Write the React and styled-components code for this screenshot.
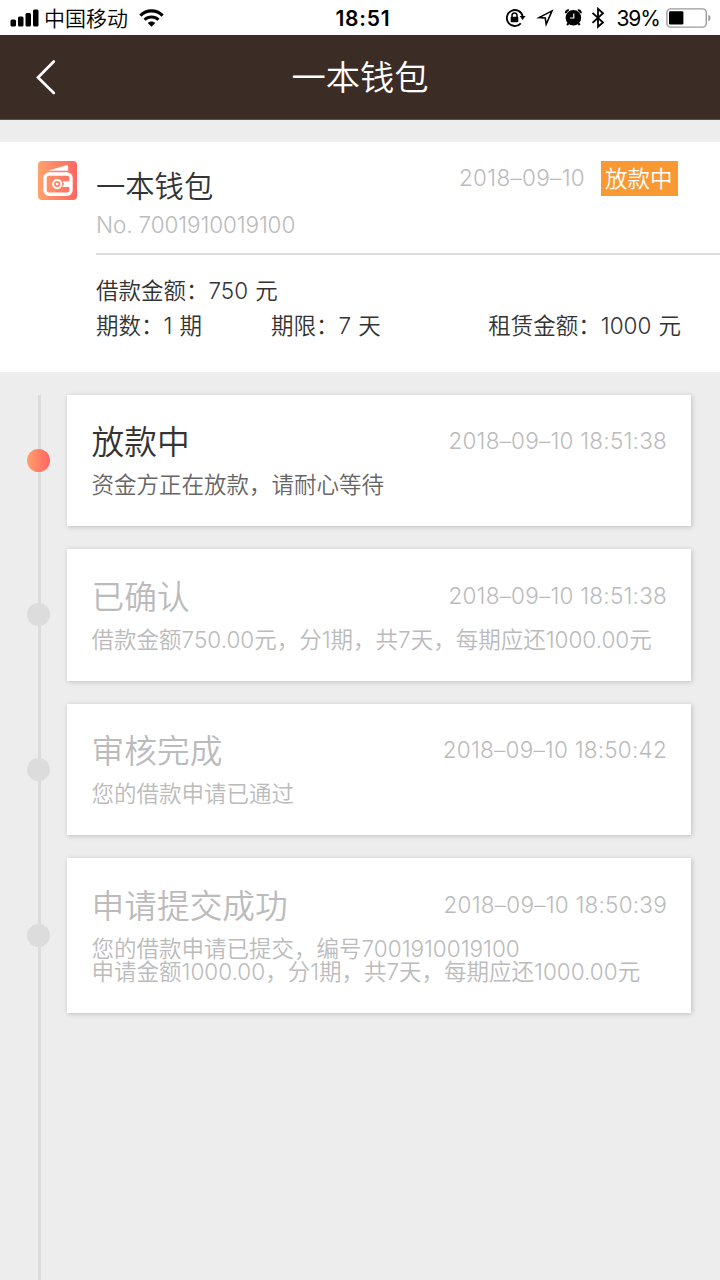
import * as React from "react";
import styled, { createGlobalStyle } from "styled-components";

const GlobalStyle = createGlobalStyle`
  * {
    box-sizing: border-box;
  }
  body {
    margin: 0;
    background-color: #ededed;
    font-family: Inter, "Noto Sans CJK SC", sans-serif;
    font-weight: 350;
    color: #333;
  }
`;

const Page = styled.div`
  display: flex;
  flex-direction: column;
  width: 720px;
  height: 1280px;
  overflow: hidden;
`;

const StatusBar = styled.div`
  display: grid;
  grid-template-columns: 1fr auto 1fr;
  align-items: center;
  height: 35px;
  flex-shrink: 0;
  padding: 0 9px 0 10px;
  background-color: #fff;
  color: #000;
  font-size: 21px;
  font-weight: 400;
  line-height: 35px;
  white-space: nowrap;

  svg {
    display: block;
    flex-shrink: 0;
  }
`;

const StatusLeft = styled.div`
  display: flex;
  align-items: center;

  span {
    margin: 0 11px 0 5px;
    font-weight: 350;
  }
`;

const Clock = styled.div`
  font-size: 21px;
  font-weight: 600;
  letter-spacing: 0.8px;
  padding: 1px 0 0 5px;
`;

const StatusRight = styled.div`
  display: flex;
  align-items: center;
  justify-content: flex-end;

  span {
    margin-right: 6px;
    padding-top: 1px;
    font-size: 21px;
    letter-spacing: -1px;
  }
`;

const NavBar = styled.header`
  display: grid;
  grid-template-columns: 92px 1fr 92px;
  align-items: center;
  height: 85px;
  flex-shrink: 0;
  background-color: #3c2c26;
  border-bottom: 1px solid #5d504b;
  color: #fff;

  svg {
    display: block;
    margin-left: 35px;
  }
  h1 {
    margin: 0;
    padding-top: 2px;
    font-size: 34.3px;
    font-weight: 350;
    line-height: 82px;
    text-align: center;
  }
`;

const Summary = styled.section`
  display: grid;
  grid-template-columns: 58px 1fr;
  height: 230px;
  flex-shrink: 0;
  margin-top: 22px;
  padding: 19px 0 0 38px;
  background-color: #fff;
  white-space: nowrap;

  > svg {
    display: block;
  }
`;

const SummaryHead = styled.div`
  display: flex;
  justify-content: space-between;
  height: 94px;
  padding-right: 42px;
  border-bottom: 2px solid #dcdcdc;
`;

const Name = styled.div`
  font-size: 29.3px;
  line-height: 51px;

  small {
    display: block;
    color: #bbb;
    font-size: 22.5px;
    font-weight: 330;
    line-height: 25px;
    letter-spacing: -0.12px;
  }
`;

const State = styled.div`
  display: flex;
  align-items: flex-start;

  time {
    margin-right: 16px;
    color: #bbb;
    font-size: 22.5px;
    font-weight: 330;
    line-height: 34px;
    letter-spacing: 0.3px;
  }
`;

const Tag = styled.span`
  width: 77px;
  height: 35px;
  background-color: #f89933;
  color: #fff;
  font-size: 22.5px;
  line-height: 35px;
  text-indent: 4px;
`;

const Terms = styled.div`
  padding: 18px 39px 0 0;
  font-size: 22.5px;
  line-height: 35px;
  word-spacing: 0.8px;

  div {
    display: grid;
    grid-template-columns: 175px 1fr auto;
  }
`;

const Timeline = styled.main`
  position: relative;
  flex: 1;
  margin-top: 22.7px;

  &:before {
    background-color: #dcdcdc;
    bottom: 0;
    content: "";
    left: 38px;
    position: absolute;
    top: 0;
    width: 3px;
  }
`;

const Step = styled.div`
  position: relative;
  display: grid;
  grid-template-columns: 67px 624px;
  align-items: center;
  margin-bottom: 23px;
`;

const Dot = styled.i`
  width: 23px;
  height: 23px;
  margin-left: 27px;
  border-radius: 50%;
  background: ${(props) =>
    props.$active ? "linear-gradient(90deg, #ffa06c, #ff6462)" : "#dcdcdc"};
`;

const Card = styled.article`
  padding: 27.5px 24px 30px 24.6px;
  background-color: #fff;
  box-shadow: 1px 1px 5px rgba(0, 0, 0, 0.2);
  color: ${(props) => (props.$active ? "#666" : "#bbb")};
  white-space: nowrap;

  p {
    margin: 11px 0 0;
    font-size: 22.5px;
    line-height: 23px;
    white-space: pre-line;
  }
`;

const CardHead = styled.div`
  display: flex;
  justify-content: space-between;
  line-height: 40px;

  h2 {
    margin: 0;
    color: ${(props) => (props.$active ? "#333" : "#bbb")};
    font-size: 32.7px;
    font-weight: 350;
  }
  time {
    color: #bbb;
    font-size: 22.5px;
    font-weight: 330;
    line-height: 38px;
    letter-spacing: 0.23px;
  }
`;

const steps = [
  {
    title: "放款中",
    time: "2018–09–10 18:51:38",
    text: "资金方正在放款，请耐心等待",
  },
  {
    title: "已确认",
    time: "2018–09–10 18:51:38",
    text: "借款金额750.00元，分1期，共7天，每期应还1000.00元",
  },
  {
    title: "审核完成",
    time: "2018–09–10 18:50:42",
    text: "您的借款申请已通过",
  },
  {
    title: "申请提交成功",
    time: "2018–09–10 18:50:39",
    text: "您的借款申请已提交，编号7001910019100\n申请金额1000.00，分1期，共7天，每期应还1000.00元",
  },
];

const SignalIcon = () => (
  <svg width="29" height="18" viewBox="0 0 29 18">
    <rect x="0.5" y="10.5" width="5.5" height="7" rx="1.5" />
    <rect x="8" y="7.5" width="5.5" height="10" rx="1.5" />
    <rect x="15.5" y="4" width="5.5" height="13.5" rx="1.5" />
    <rect x="23" y="0.5" width="5.5" height="17" rx="1.5" />
  </svg>
);

const WifiIcon = () => (
  <svg width="25" height="18" viewBox="0 0 25 18" fill="none" stroke="#000">
    <path d="M1.4 6.6C7.6 .4 17.4 .4 23.6 6.6" strokeWidth="3.2" />
    <path d="M5.5 10.8C9.4 7 15.6 7 19.5 10.8" strokeWidth="3" />
    <path
      d="M8.8 14.1C10.9 12.1 14.1 12.1 16.2 14.1L12.5 17.7Z"
      fill="#000"
      stroke="none"
    />
  </svg>
);

const IconStrip = styled.svg`
  margin-right: 8px;
`;

// rotation lock, location, alarm and bluetooth share one strip
const StatusIcons = () => (
  <IconStrip width="104" height="22" viewBox="505 7 104 22">
    <g fill="none" stroke="#000">
      <path d="M521.8 23.4A8 8 0 1 1 523.7 16.4" strokeWidth="1.8" />
      <path d="M513 17.5V15.5A2.5 2.5 0 0 1 518 15.5V17.5" strokeWidth="1.5" />
      <path
        d="M540 17.6L553 10.9L547.2 24.2L546.2 18Z"
        strokeWidth="1.6"
        strokeLinejoin="miter"
        strokeMiterlimit="10"
      />
      <path
        d="M567 13.2C566.6 11.4 568 10 569.9 10.2M581.7 13.2C582.1 11.4 580.7 10 578.8 10.2"
        strokeWidth="2"
      />
      <path d="M569.8 23L568 25M579 23L580.8 25" strokeWidth="2" />
      <path
        d="M593.5 12.8L604 22.5L599 26.8V8.8L604 13.2L593.5 22.8"
        strokeWidth="1.8"
      />
    </g>
    <rect x="511.7" y="16.8" width="7.6" height="5.4" rx="0.8" />
    <path d="M520.7 16H526.5L523.6 20Z" />
    <circle cx="574.4" cy="17.8" r="7.8" />
    <path d="M574.8 13.4V18H571" fill="none" stroke="#fff" strokeWidth="1.2" />
  </IconStrip>
);

const BatteryIcon = () => (
  <svg width="45" height="20" viewBox="0 0 45 20">
    <rect
      x="0.9"
      y="0.9"
      width="39.4"
      height="18.2"
      rx="3.8"
      fill="none"
      stroke="#9a9a9a"
      strokeWidth="1.4"
    />
    <rect x="3" y="3.3" width="14.4" height="13.2" rx="1.3" />
    <path d="M42.4 6.8C45.2 7.8 45.2 12.2 42.4 13.2Z" fill="#9a9a9a" />
  </svg>
);

const BackIcon = () => (
  <svg width="22" height="36" viewBox="0 0 22 36">
    <path
      d="M18.8 2.5L3 18.5L18.8 34"
      fill="none"
      stroke="#fff"
      strokeWidth="2.7"
      strokeLinecap="round"
    />
  </svg>
);

const WalletIcon = () => (
  <svg width="39" height="39" viewBox="0 0 39 39">
    <defs>
      <linearGradient id="wallet" x1="0" x2="1" y1="0" y2="0">
        <stop offset="0" stopColor="#ffa26d" />
        <stop offset="1" stopColor="#ff6662" />
      </linearGradient>
    </defs>
    <rect width="39" height="39" rx="4" fill="url(#wallet)" />
    <path d="M10 9.8L28 4.2Q29.9 3.8 30.1 5.6V9.8Z" fill="#fff" />
    <rect
      x="7"
      y="13"
      width="26"
      height="20.3"
      rx="4"
      fill="none"
      stroke="#fff"
      strokeWidth="3.4"
    />
    <path d="M24.4 20.2H33V26H24.4L26 23.1Z" fill="#fff" />
    <circle
      cx="19.2"
      cy="23.1"
      r="4.1"
      fill="none"
      stroke="#fff"
      strokeWidth="2"
    />
    <circle cx="19.2" cy="23.1" r="1.3" fill="#fff" />
  </svg>
);

const App = () => {
  return (
    <>
      <GlobalStyle />
      <Page>
        <StatusBar>
          <StatusLeft>
            <SignalIcon />
            <span>中国移动</span>
            <WifiIcon />
          </StatusLeft>
          <Clock>18:51</Clock>
          <StatusRight>
            <StatusIcons />
            <span>39%</span>
            <BatteryIcon />
          </StatusRight>
        </StatusBar>

        <NavBar>
          <BackIcon />
          <h1>一本钱包</h1>
        </NavBar>

        <Summary>
          <WalletIcon />
          <div>
            <SummaryHead>
              <Name>
                一本钱包
                <small>No. 7001910019100</small>
              </Name>
              <State>
                <time>2018–09–10</time>
                <Tag>放款中</Tag>
              </State>
            </SummaryHead>
            <Terms>
              借款金额：750 元
              <div>
                <span>期数：1 期</span>
                <span>期限：7 天</span>
                <span>租赁金额：1000 元</span>
              </div>
            </Terms>
          </div>
        </Summary>

        <Timeline>
          {steps.map((step, i) => (
            <Step key={step.title}>
              <Dot $active={i === 0} />
              <Card $active={i === 0}>
                <CardHead $active={i === 0}>
                  <h2>{step.title}</h2>
                  <time>{step.time}</time>
                </CardHead>
                <p>{step.text}</p>
              </Card>
            </Step>
          ))}
        </Timeline>
      </Page>
    </>
  );
};
export default App;
